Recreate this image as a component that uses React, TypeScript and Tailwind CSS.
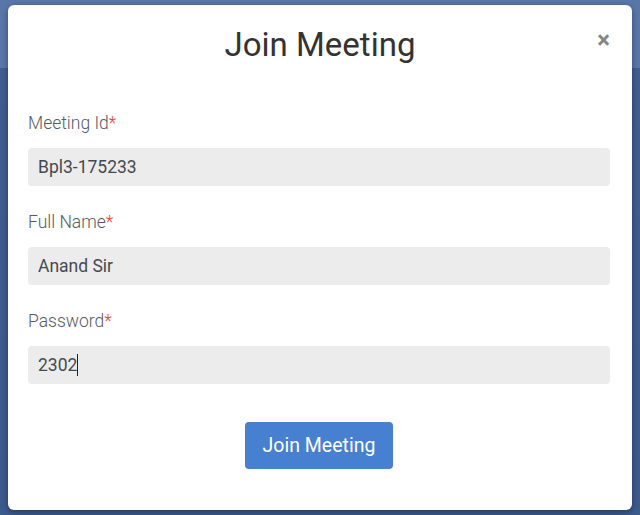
import React from "react";

const fields = [
  { label: "Meeting Id", value: "Bpl3-175233" },
  { label: "Full Name", value: "Anand Sir" },
  { label: "Password", value: "2302", caret: true },
];

export default function App() {
  return (
    <div
      className="w-[640px] h-[515px] overflow-hidden bg-[linear-gradient(to_bottom,#5876a7_0px,#5876a7_68px,#3f5d8f_68px,#3c5a8c_100%)] pt-[5px] pl-[8px]"
      style={{ fontFamily: "Roboto, 'Liberation Sans', sans-serif" }}
    >
      <div className="w-[624px] h-[505px] rounded-[6px] bg-white shadow-[0_2px_6px_rgba(0,0,0,0.35)] flex flex-col">
        {/* header */}
        <div className="relative h-[80px] flex items-center justify-center">
          <h3 className="text-[33px] leading-[40px] text-[#333] font-normal">Join Meeting</h3>
          <button className="absolute right-[22px] top-[23px] text-[24px] leading-[24px] font-bold text-[#858585]">
            ×
          </button>
        </div>

        {/* body */}
        <div className="pt-[26px] pl-[20px] pr-[22px] flex flex-col">
          {fields.map((f, i) => (
            <div key={f.label} className={i > 0 ? "mt-[24px]" : ""}>
              <label className="block text-[17.5px] leading-[24px] font-light text-[#555c66]">
                {f.label}
                <span className="text-[#e0453a]">*</span>
              </label>
              <div className="mt-[13px] h-[38px] rounded-[4px] bg-[#ececec] px-[10px] flex items-center text-[17.5px] text-[#444a52]">
                {f.value}
                {f.caret && <span className="inline-block w-px h-[22px] bg-[#222]" />}
              </div>
            </div>
          ))}

          <div className="mt-[38px] flex justify-center">
            <button className="w-[148px] h-[47px] rounded-[4px] bg-[#4780d1] text-white text-[19.5px]">
              Join Meeting
            </button>
          </div>
        </div>
      </div>
    </div>
  );
}
